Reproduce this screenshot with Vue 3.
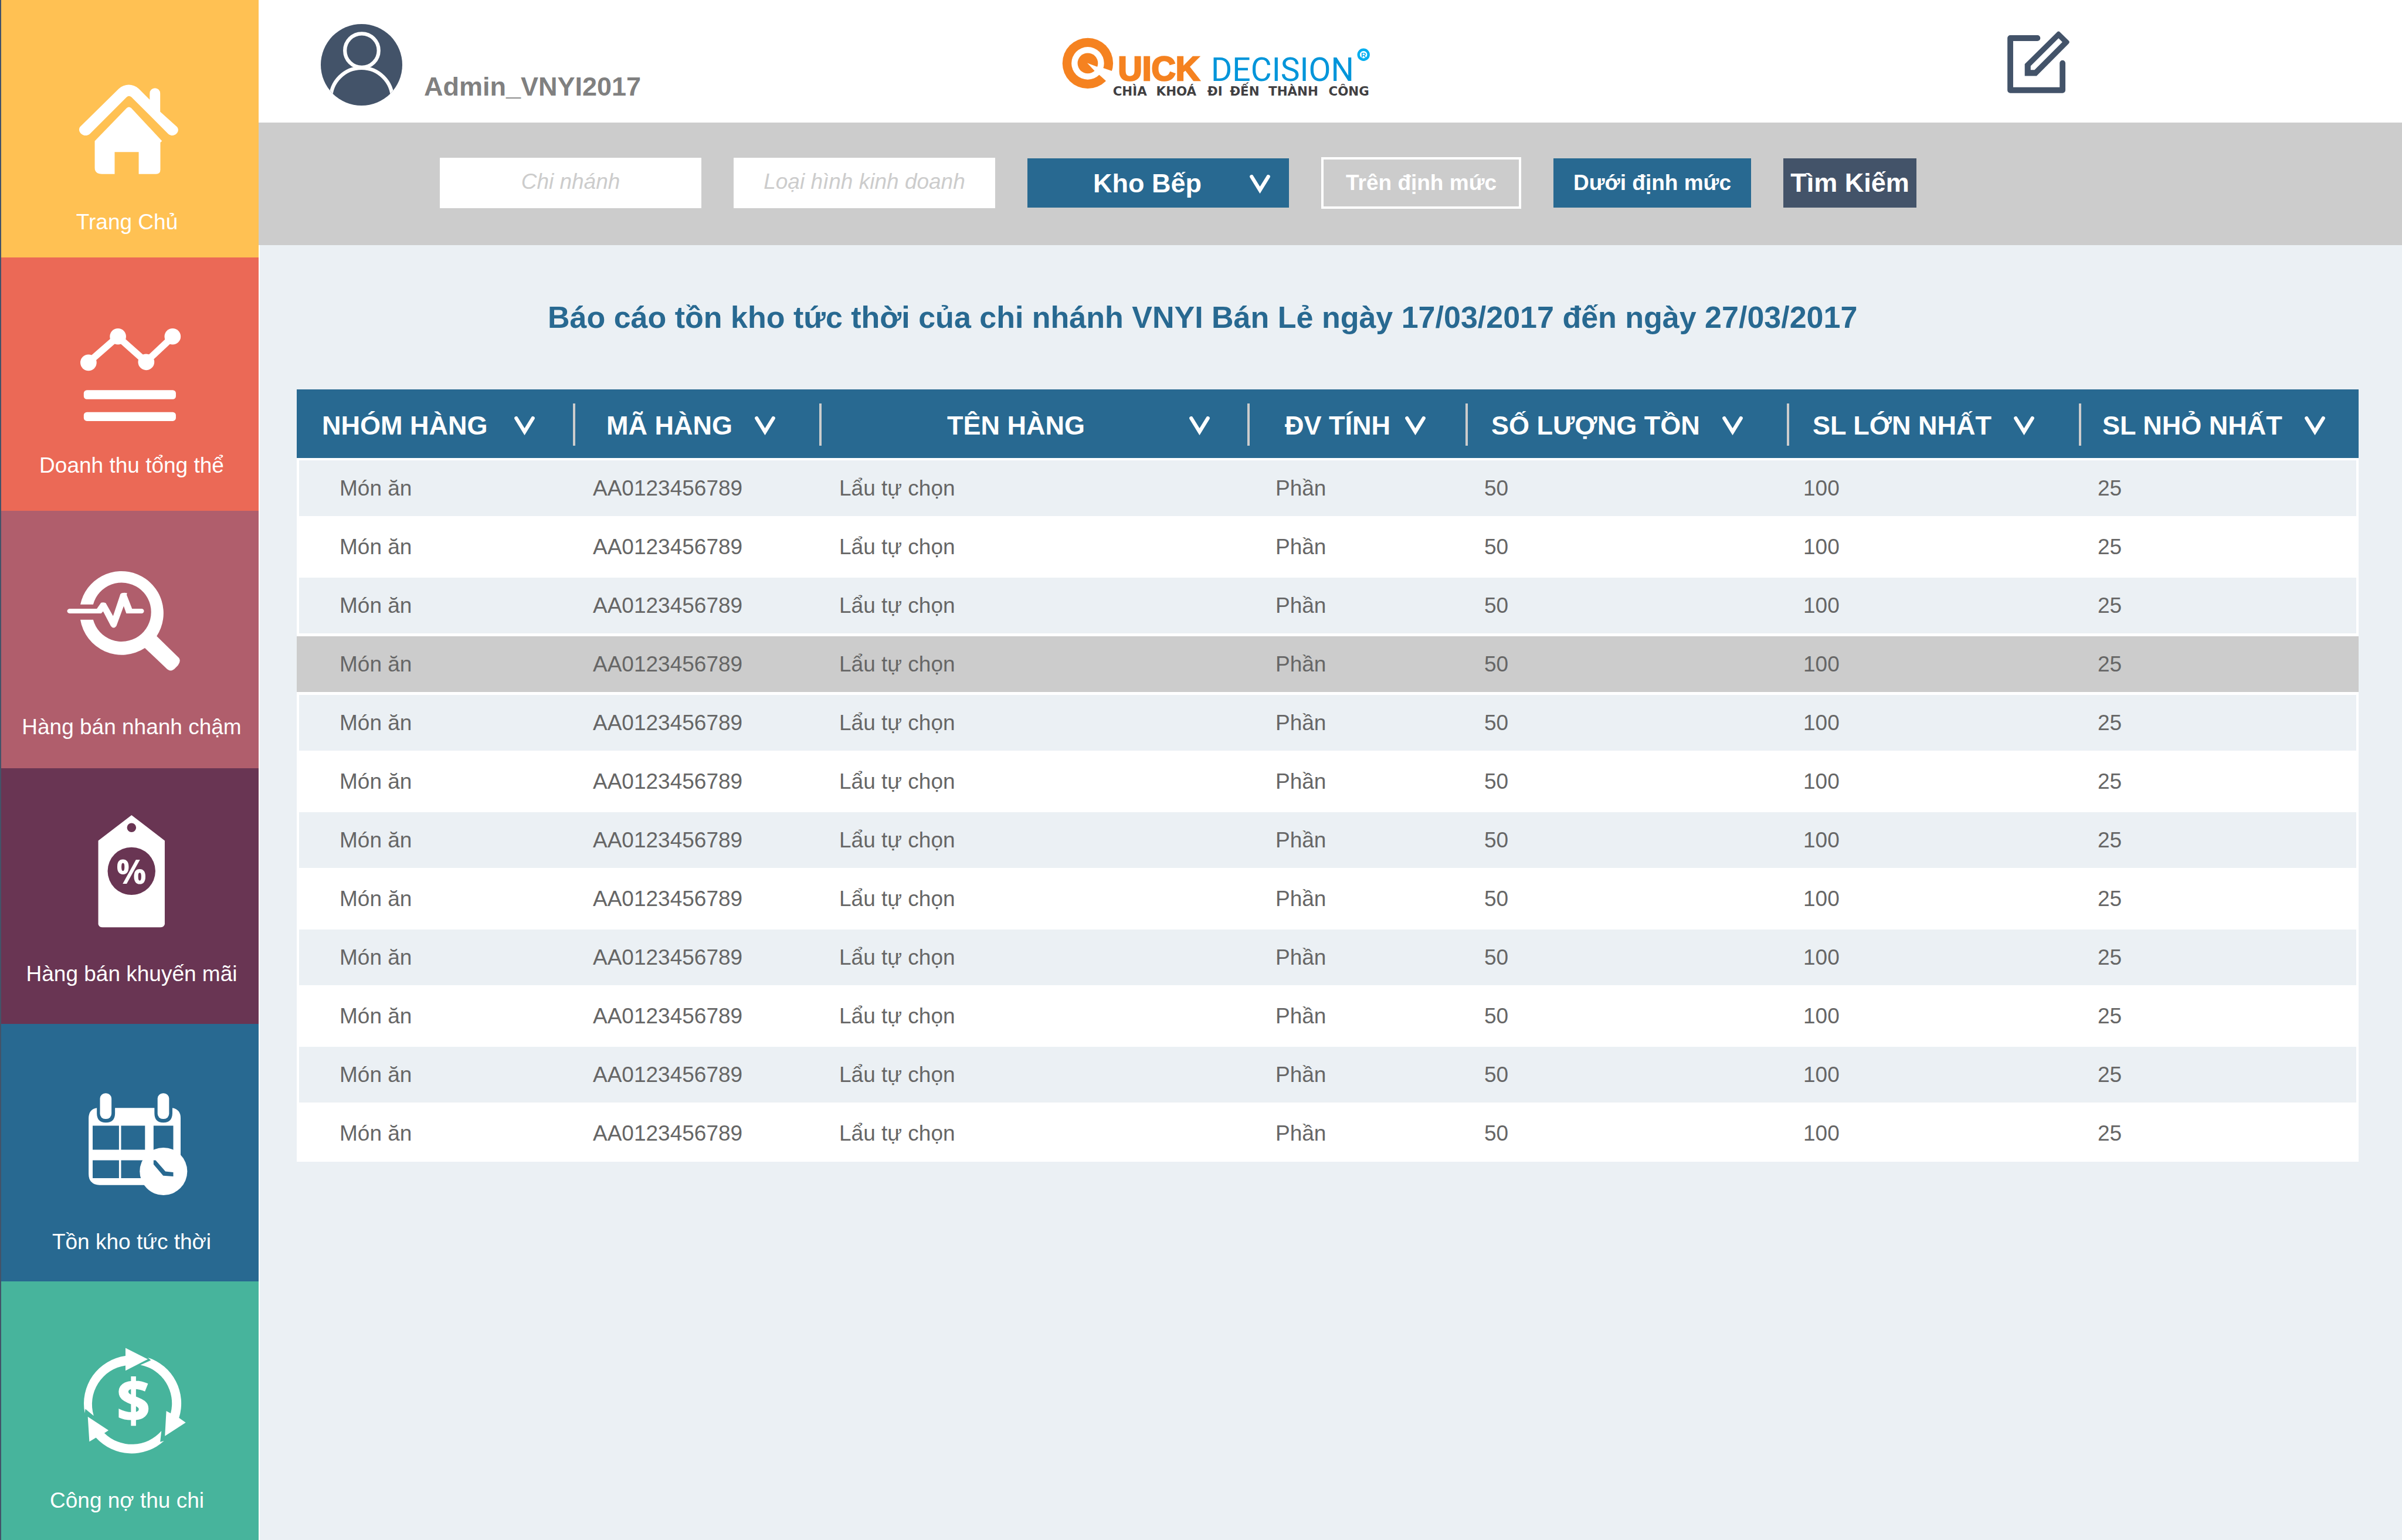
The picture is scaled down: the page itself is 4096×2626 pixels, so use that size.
<script setup>
import { ref } from 'vue'

const branch = ref('')
const businessType = ref('')
const warehouse = ref('Kho Bếp')

const columns = [
  { key: 'group', label: 'NHÓM HÀNG' },
  { key: 'code', label: 'MÃ HÀNG' },
  { key: 'name', label: 'TÊN HÀNG' },
  { key: 'unit', label: 'ĐV TÍNH' },
  { key: 'stock', label: 'SỐ LƯỢNG TỒN' },
  { key: 'max', label: 'SL LỚN NHẤT' },
  { key: 'min', label: 'SL NHỎ NHẤT' },
]

const rows = Array.from({ length: 12 }, (_, id) => ({
  id,
  group: 'Món ăn',
  code: 'AA0123456789',
  name: 'Lẩu tự chọn',
  unit: 'Phần',
  stock: 50,
  max: 100,
  min: 25,
}))

const selectedRow = ref(3)
</script>

<template>
  <div class="app">
    <nav class="sidebar">
      <a class="tile tile-home" href="#">
        <svg class="tile-icon" viewBox="0 38 494 360" aria-hidden="true">
          <path d="M153 243 L227 170 C238 160 254 160 265 170 L286 191 V179 A10 10 0 0 1 306 179 V214 L338 243 C346 252 332 266 321 256 L251 186 Q246.300 182 242 186 L172 256 C161 266 146 252 153 243Z" />
          <path d="M181 270 L242 207 Q246.300 203 250.700 207 L309.500 270 L306.300 273 V325 Q306.300 333 298 333 H265 V291 H219 V333 H195 Q181 333 181 321Z" />
        </svg>
        <span class="tile-label">Trang Chủ</span>
      </a>
      <a class="tile tile-revenue" href="#">
        <svg class="tile-icon" viewBox="0 502 494 360" aria-hidden="true">
          <path class="line" d="M169 692 L225 643 L279 691 L330 643" stroke-width="13" />
          <circle cx="169" cy="692.500" r="15.500" />
          <circle cx="225.300" cy="642.500" r="15.500" />
          <circle cx="279.300" cy="691.300" r="15.500" />
          <circle cx="329.700" cy="642.500" r="15.500" />
          <rect x="160" y="745" width="176" height="17.500" rx="6" />
          <rect x="160" y="787" width="176" height="17" rx="6" />
        </svg>
        <span class="tile-label">Doanh thu tổng thể</span>
      </a>
      <a class="tile tile-speed" href="#">
        <svg class="tile-icon" viewBox="0 1001 494 360" aria-hidden="true">
          <path d="M153.500 1153.800 A80.300 80.300 0 1 1 299.300 1214.400 L342 1256 Q346 1262 340 1270 L335 1275 Q326 1285 317 1275 L276.700 1237 A80.300 80.300 0 0 1 153.500 1183 H178 A56.300 56.300 0 1 0 178 1153.800Z" />
          <path d="M133 1162 H185 L193 1150.500 Q197 1149 202 1151 L216 1176 L230 1134 Q233 1130.500 242.700 1131.900 L242 1135.600 L252.300 1162 H271 Q275 1163 275 1166.500 T271 1171 H241.300 L236.300 1157 L222.300 1195 Q217 1202 211.700 1195 L197 1167 L193.300 1171 H133 Q128.300 1170 128.300 1166.500 T133 1162Z" />
        </svg>
        <span class="tile-label">Hàng bán nhanh chậm</span>
      </a>
      <a class="tile tile-promo" href="#">
        <svg class="tile-icon" viewBox="0 1472 494 360" aria-hidden="true">
          <path fill-rule="evenodd" d="M251.300 1555.600 L314.700 1604.400 V1764 Q313 1770 306 1770 H196 Q189 1770 187.700 1764 V1604.400Z M260 1579.400 A8.700 8.700 0 1 0 242.600 1579.400 A8.700 8.700 0 1 0 260 1579.400Z M296.800 1662.500 A45.600 45.600 0 1 0 205.600 1662.500 A45.600 45.600 0 1 0 296.800 1662.500Z" />
          <text class="percent" x="251" y="1687" text-anchor="middle">%</text>
        </svg>
        <span class="tile-label">Hàng bán khuyến mãi</span>
      </a>
      <a class="tile tile-stock" href="#">
        <svg class="tile-icon" viewBox="0 1985 494 360" aria-hidden="true">
          <path fill-rule="evenodd" d="M185 2116 V2126 Q185 2144 202.300 2144 T219.700 2126 V2116 H295 V2126 Q295 2144 312 2144 T329.300 2126 V2116 Q345 2119 345 2135 V2240 H280 V2263.300 H190 Q169.300 2262 169.300 2242 V2135 Q170 2118 185 2116Z M177 2149.800 V2195.700 H227.300 V2149.800Z M231.300 2149.800 V2195.700 H277 V2149.800Z M293.300 2149.800 V2197 H331 V2149.800Z M177 2216 V2250 H227.300 V2216Z M231.300 2216 V2250 H277 V2216Z" />
          <rect x="191" y="2088" width="22" height="49" rx="10" />
          <rect x="301" y="2088" width="22" height="49" rx="10" />
          <circle cx="312.300" cy="2237.200" r="45.400" />
          <path class="hand" d="M293.300 2216 H297.300 L316 2237.200 L331 2239 V2246.800 L311.700 2245.500 L293.300 2223.800Z" />
        </svg>
        <span class="tile-label">Tồn kho tức thời</span>
      </a>
      <a class="tile tile-debt" href="#">
        <svg class="tile-icon" viewBox="0 2478 494 360" aria-hidden="true">
          <path d="M162 2698 A92 92 0 0 1 239.700 2588.600 V2573.300 L282.300 2595 L239.700 2616.700 V2607 A75 75 0 0 0 179 2703 L163 2690Z" />
          <path d="M282.300 2591.800 A92 92 0 0 1 342 2707 L354.700 2716 L315 2741.700 L317.700 2693.800 L326 2698.300 A75 75 0 0 0 268.300 2605.800 L288.300 2597Z" />
          <path d="M183.300 2744.800 A92 92 0 0 0 313.300 2751 L306 2753 L308.300 2732 A75 75 0 0 1 199.300 2736 L207.300 2730.800 L167.700 2704.700 L170.700 2752.500Z" />
          <text class="dollar" x="255" y="2715" text-anchor="middle">$</text>
        </svg>
        <span class="tile-label">Công nợ thu chi</span>
      </a>
    </nav>

    <div class="page">
      <header class="topbar">
        <div class="user">
          <svg class="avatar" viewBox="0 0 156 156" aria-hidden="true">
            <clipPath id="avatar-disc"><circle cx="78" cy="78" r="78" /></clipPath>
            <circle cx="78" cy="78" r="78" fill="#435369" />
            <g clip-path="url(#avatar-disc)" fill="none" stroke="#fff" stroke-width="7">
              <circle cx="78.500" cy="50.700" r="32.300" />
              <circle cx="78" cy="143" r="59" />
            </g>
          </svg>
          <span class="user-name">Admin_VNYI2017</span>
        </div>

        <svg class="logo" viewBox="2020 60 602 128" role="img" aria-label="Quick Decision">
          <circle cx="2075" cy="120.500" r="48.500" fill="#f58220" />
          <circle cx="2075" cy="120.500" r="31.200" fill="#fff" />
          <circle cx="2075" cy="120.500" r="19.500" fill="#f58220" />
          <path fill="#fff" d="M2074 120 L2098 129 L2089 136Z M2103 129 L2126 137 L2113 157 L2094 140Z" />
          <text class="logo-quick" x="2133" y="153">UICK</text>
          <text class="logo-decision" x="2311" y="154">DECISION</text>
          <text class="logo-tagline" y="182">
            <tspan x="2123">CHÌA</tspan>
            <tspan x="2206">KHOÁ</tspan>
            <tspan x="2304">ĐI</tspan>
            <tspan x="2347">ĐẾN</tspan>
            <tspan x="2421">THÀNH</tspan>
            <tspan x="2536">CÔNG</tspan>
          </text>
          <circle cx="2603" cy="104" r="9.500" fill="none" stroke="#00aeef" stroke-width="5" />
          <text class="logo-mark" x="2603" y="109" text-anchor="middle">R</text>
        </svg>

        <button class="edit" type="button" aria-label="Chỉnh sửa">
          <svg viewBox="155 85 357 390" aria-hidden="true">
            <path d="M328 125 H172 V424 H472 V269" fill="none" stroke="#435369" stroke-width="33" stroke-linecap="round" stroke-linejoin="round" />
            <path fill="#435369" fill-rule="evenodd" d="M255 274 L440 91 Q449 82 458 91 L507 139 Q516 148 507 157 L323 342 H255Z M289 285 V308 H311 L471 148 L449 126Z" />
          </svg>
        </button>
      </header>

      <form class="filters" @submit.prevent>
        <input v-model="branch" class="field" type="text" placeholder="Chi nhánh" aria-label="Chi nhánh" />
        <input v-model="businessType" class="field" type="text" placeholder="Loại hình kinh doanh" aria-label="Loại hình kinh doanh" />
        <div class="picker">
          <select v-model="warehouse" class="picker-select" aria-label="Kho">
            <option>Kho Bếp</option>
          </select>
          <svg class="chevron picker-chevron" viewBox="0 0 39 36" aria-hidden="true">
            <path d="M3.500 3.500 L19.500 29.500 L35.500 3.500" />
          </svg>
        </div>
        <button class="limit limit-over" type="button">Trên định mức</button>
        <button class="limit limit-under" type="button">Dưới định mức</button>
        <button class="search" type="submit">Tìm Kiếm</button>
      </form>

      <main class="report">
        <h1 class="report-title">Báo cáo tồn kho tức thời của chi nhánh VNYI Bán Lẻ ngày 17/03/2017 đến ngày 27/03/2017</h1>
        <table class="stock">
          <colgroup>
            <col v-for="c in columns" :key="c.key" :class="'col-' + c.key" />
          </colgroup>
          <thead>
            <tr>
              <th v-for="c in columns" :key="c.key" scope="col">
                <button class="sort" :class="'sort-' + c.key" type="button">
                  {{ c.label }}
                  <svg class="chevron" viewBox="0 0 39 36" aria-hidden="true">
                    <path d="M3.500 3.500 L19.500 29.500 L35.500 3.500" />
                  </svg>
                </button>
              </th>
            </tr>
          </thead>
          <tbody>
            <tr
              v-for="row in rows"
              :key="row.id"
              :class="{ selected: row.id === selectedRow }"
              @click="selectedRow = row.id"
            >
              <td v-for="c in columns" :key="c.key" :class="'cell-' + c.key">{{ row[c.key] }}</td>
            </tr>
          </tbody>
        </table>
      </main>
    </div>
  </div>
</template>

<style>
body {
  margin: 0;
  background: #ebf0f4;
}
</style>

<style scoped>
.app,
.app * {
  box-sizing: border-box;
}

.app {
  display: flex;
  min-height: 100vh;
  font-family: "Liberation Sans", Arial, sans-serif;
  font-size: 37px;
  color: #666;
}

button,
input,
select {
  margin: 0;
  border: 0;
  border-radius: 0;
  padding: 0;
  background: none;
  font-family: inherit;
}

/* Sidebar */
.sidebar {
  flex: none;
  display: grid;
  grid-template-rows: 439fr 432fr 439fr 436fr 439fr 441fr;
  width: 441px;
  border-left: 2px solid #435369;
}

.tile {
  display: flex;
  flex-direction: column;
  justify-content: flex-end;
  align-items: center;
  color: #fff;
  text-decoration: none;
}

.tile-icon {
  width: 441px;
  height: 322px;
  margin-left: -2px;
  fill: #fff;
}

.tile-icon .line {
  fill: none;
  stroke: #fff;
}

.tile-icon .hand {
  fill: #286991;
}

.tile-label {
  padding-left: 6px;
  line-height: 48px;
  white-space: nowrap;
}

.tile-home {
  background: #ffc153;
  padding-bottom: 36px;
}

.tile-revenue {
  background: #eb6956;
  padding-bottom: 53px;
}

.tile-speed {
  background: #b05e6c;
  padding-bottom: 46px;
}

.tile-promo {
  background: #693553;
  padding-bottom: 61px;
}

.tile-stock {
  background: #286991;
  padding-bottom: 43px;
}

.tile-debt {
  background: #47b49c;
  padding-bottom: 43px;
}

.tile-home .tile-label,
.tile-debt .tile-label {
  padding: 0 10px 0 0;
}

.percent {
  font: 700 64px "Open Sans", sans-serif;
}

.dollar {
  font: 700 112px "Open Sans", sans-serif;
  stroke: #fff;
  stroke-width: 2px;
}

/* Top bar */
.page {
  flex: 1;
  display: flex;
  flex-direction: column;
  min-width: 0;
}

.topbar {
  display: grid;
  grid-template-columns: 1258px 538px 1fr;
  align-items: center;
  height: 209px;
  padding: 12px 567px 0 106px;
  background: #fff;
}

.user {
  display: flex;
  align-items: flex-end;
  gap: 37px;
}

.avatar {
  width: 139px;
  height: 139px;
}

.user-name {
  padding-bottom: 8px;
  font-size: 45px;
  font-weight: 700;
  line-height: 48px;
  color: #808080;
}

.logo {
  width: 538px;
  height: 114px;
}

.logo-quick {
  font: 700 64px "Liberation Sans", Arial, sans-serif;
  fill: #f58220;
  stroke: #f58220;
  stroke-width: 3px;
}

.logo-decision {
  font: 400 62px Roboto, sans-serif;
  fill: #0095da;
}

.logo-tagline {
  font: 700 24px "DejaVu Sans", sans-serif;
  fill: #414042;
}

.logo-mark {
  font: 700 13px "Liberation Sans", Arial, sans-serif;
  fill: #00aeef;
}

.edit {
  justify-self: end;
  display: flex;
}

.edit svg {
  width: 106px;
  height: 116px;
}

/* Filters */
.filters {
  display: flex;
  align-items: center;
  gap: 55px;
  height: 209px;
  padding: 0 0 3px 309px;
  background: #ccc;
}

.field {
  width: 446px;
  height: 86px;
  padding-bottom: 4px;
  background: #fff;
  font-size: 37px;
  font-style: italic;
  text-align: center;
  color: #666;
}

.field::placeholder {
  color: #ccc;
  opacity: 1;
}

.picker {
  position: relative;
  width: 446px;
}

.picker-select {
  appearance: none;
  display: block;
  width: 100%;
  height: 84px;
  padding-left: 112px;
  background: #286991;
  font-size: 45px;
  font-weight: 700;
  color: #fff;
}

.chevron {
  flex: none;
  width: 35px;
  height: 32px;
  fill: none;
  stroke: #fff;
  stroke-width: 7;
  stroke-linecap: round;
}

.picker-chevron {
  position: absolute;
  top: 28px;
  right: 32px;
  pointer-events: none;
}

.limit {
  height: 84px;
  font-size: 37px;
  font-weight: 700;
  color: #fff;
}

.limit-over {
  width: 341px;
  height: 88px;
  border: 4px solid #fff;
}

.limit-under {
  width: 337px;
  background: #286991;
}

.search {
  width: 227px;
  height: 84px;
  background: #435369;
  font-size: 45px;
  font-weight: 700;
  color: #fff;
}

/* Report */
.report {
  flex: 1;
  padding: 93px 74px 93px 63px;
  border-left: 2px solid #fff;
  background: #ebf0f4;
}

.report-title {
  margin: 0 0 93px;
  padding-left: 428px;
  font-size: 52px;
  line-height: 60px;
  white-space: nowrap;
  color: #286991;
}

.stock {
  width: 100%;
  table-layout: fixed;
  border-collapse: separate;
  border-spacing: 0;
}

.col-group {
  width: 471px;
}

.col-code {
  width: 420px;
}

.col-name {
  width: 730px;
}

.col-unit {
  width: 372px;
}

.col-stock {
  width: 548px;
}

.col-max {
  width: 498px;
}

.col-min {
  width: 477px;
}

.stock th {
  height: 117px;
  padding: 2px 0 0;
  background: #286991;
}

.sort {
  display: flex;
  align-items: center;
  gap: 38px;
  width: 100%;
  height: 72px;
  padding-top: 4px;
  border-left: 4px solid #ccc;
  font-size: 45px;
  font-weight: 700;
  white-space: nowrap;
  color: #fff;
}

.sort-group {
  gap: 46px;
  padding-left: 43px;
  border-left: 0;
}

.sort-code {
  padding-left: 53px;
}

.sort-name {
  gap: 178px;
  padding-left: 214px;
}

.sort-unit {
  gap: 25px;
  padding-left: 60px;
}

.sort-stock,
.sort-max {
  padding-left: 40px;
}

.sort-min {
  padding-left: 36px;
}

.stock td {
  height: 100px;
  padding: 0 0 0 32px;
  border-top: 4px solid #fff;
  border-bottom: 1px solid #fff;
}

.stock tbody tr:nth-child(even) {
  background: #fff;
}

.stock tbody tr:nth-child(odd) td:first-child {
  border-left: 4px solid #fff;
  padding-left: 69px;
}

.stock tbody tr:nth-child(odd) td:last-child {
  border-right: 4px solid #fff;
}

.stock tbody tr.selected {
  background: #ccc;
}

.stock .cell-group {
  padding-left: 73px;
}

.stock .cell-code,
.stock .cell-name {
  padding-left: 34px;
}

.stock .cell-unit {
  padding-left: 48px;
}

.stock .cell-max {
  padding-left: 28px;
}
</style>
